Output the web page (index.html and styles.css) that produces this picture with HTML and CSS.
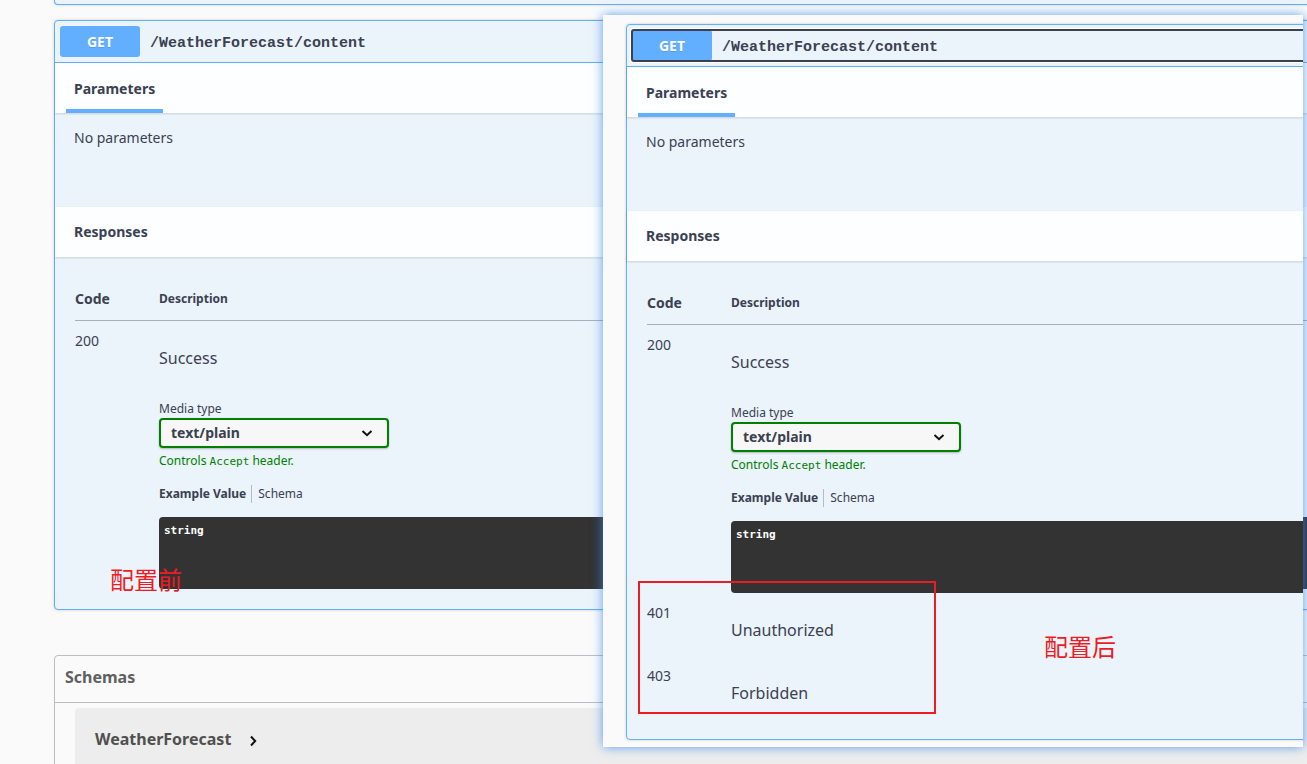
FILE: index.html
```html
<!DOCTYPE html>
<html lang="zh-CN">
<head>
<meta charset="utf-8">
<title>WeatherForecast API</title>
<link rel="stylesheet" href="styles.css">
</head>
<body>
<main class="page">
  <div class="opblock opblock-previous"></div>

  <section class="opblock">
    <button class="summary" type="button"><span class="method">GET</span><span class="path">/WeatherForecast/content</span></button>
    <div class="section-header"><h4 class="tab">Parameters</h4></div>
    <p class="no-params">No parameters</p>
    <div class="section-header"><h4 class="section-title">Responses</h4></div>
    <div class="responses">
      <table class="responses-table">
        <thead><tr><th class="col-code">Code</th><th class="col-desc">Description</th></tr></thead>
        <tbody>
          <tr>
            <td class="code">200</td>
            <td class="desc">
              <p class="message">Success</p>
              <div class="media">
                <label class="small" for="media-before">Media type</label>
                <div class="select-wrap">
                  <select id="media-before"><option>text/plain</option></select>
                  <svg class="select-arrow" viewBox="0 0 20 20" aria-hidden="true"><path d="M5.5 8 10 12.2 14.5 8"/></svg>
                </div>
                <p class="accept">Controls <code>Accept</code> header.</p>
              </div>
              <div class="example-tabs"><button type="button" class="example-tab active">Example Value</button><button type="button" class="example-tab">Schema</button></div>
              <pre class="example">string</pre>
            </td>
          </tr>
        </tbody>
      </table>
    </div>
  </section>

  <section class="models">
    <h4 class="models-title">Schemas</h4>
    <div class="models-list">
      <button class="model" type="button">WeatherForecast<svg class="model-arrow" viewBox="0 0 20 20" aria-hidden="true"><path d="M8 5.5 12.2 10 8 14.5"/></svg></button>
    </div>
  </section>
  <p class="note note-before">配置前</p>
</main>

<aside class="compare">
  <section class="opblock">
    <button class="summary focused" type="button"><span class="method">GET</span><span class="path">/WeatherForecast/content</span></button>
    <div class="section-header"><h4 class="tab">Parameters</h4></div>
    <p class="no-params">No parameters</p>
    <div class="section-header"><h4 class="section-title">Responses</h4></div>
    <div class="responses">
      <table class="responses-table">
        <thead><tr><th class="col-code">Code</th><th class="col-desc">Description</th></tr></thead>
        <tbody>
          <tr>
            <td class="code">200</td>
            <td class="desc">
              <p class="message">Success</p>
              <div class="media">
                <label class="small" for="media-after">Media type</label>
                <div class="select-wrap">
                  <select id="media-after"><option>text/plain</option></select>
                  <svg class="select-arrow" viewBox="0 0 20 20" aria-hidden="true"><path d="M5.5 8 10 12.2 14.5 8"/></svg>
                </div>
                <p class="accept">Controls <code>Accept</code> header.</p>
              </div>
              <div class="example-tabs"><button type="button" class="example-tab active">Example Value</button><button type="button" class="example-tab">Schema</button></div>
              <pre class="example">string</pre>
            </td>
          </tr>
          <tr><td class="code">401</td><td class="desc"><p class="message">Unauthorized</p></td></tr>
          <tr><td class="code">403</td><td class="desc"><p class="message">Forbidden</p></td></tr>
        </tbody>
      </table>
    </div>
  </section>
  <div class="highlight"></div>
  <p class="note note-after">配置后</p>
</aside>
</body>
</html>
```
FILE: styles.css
```css
* { box-sizing: border-box; }

body {
  margin: 0;
  height: 100vh;
  overflow: hidden;
  position: relative;
  background: #fafafa;
  color: #3b4151;
  font-family: "Noto Sans", "Noto Sans CJK SC", sans-serif;
  font-size: 14px;
}

h4, p, pre { margin: 0; }

button {
  margin: 0;
  border: 0;
  background: none;
  color: inherit;
  font-family: inherit;
  text-align: left;
}

.page { padding-left: 54px; margin-right: -40px; }

.opblock {
  border: 1px solid #61affe;
  border-radius: 4px;
  background: #ebf3fb;
  box-shadow: 0 0 3px rgba(0, 0, 0, .19);
}

.opblock-previous {
  height: 5px;
  margin-bottom: 15px;
  border-top: 0;
  border-radius: 0 0 4px 4px;
}

.summary {
  display: flex;
  align-items: center;
  width: calc(100% - 10px);
  margin: 5px;
  padding: 0;
}

.summary.focused {
  outline: 2px solid #3b4151;
  outline-offset: -1px;
  border-radius: 2px;
  box-shadow: 0 0 0 2px #fff;
}

.method {
  width: 80px;
  border-radius: 3px;
  background: #61affe;
  color: #fff;
  font-size: 14px;
  font-weight: 700;
  line-height: 31px;
  text-align: center;
  text-shadow: 0 1px 0 rgba(0, 0, 0, .1);
}

.path {
  padding: 4px 10px 0;
  font-family: "Liberation Mono", monospace;
  font-size: 15px;
  font-weight: 700;
}

.section-header {
  display: flex;
  align-items: center;
  height: 50px;
  padding: 0 11px;
  background: rgba(255, 255, 255, .85);
  box-shadow: 0 1px 2px rgba(0, 0, 0, .15);
}

.summary + .section-header { border-top: 1px solid #61affe; height: 51px; }

.tab, .section-title {
  padding: 0 8px;
  font-size: 14px;
  font-weight: 700;
  line-height: 52px;
}

.tab { min-width: 96px; height: 50px; border-bottom: 4px solid #61affe; }

.no-params {
  height: 94px;
  padding: 15px 19px;
  font-size: 14px;
  line-height: 20px;
}

.responses { padding: 20px; }

.responses-table {
  width: 100%;
  border-collapse: separate;
  border-spacing: 0;
  table-layout: fixed;
}

th {
  height: 44px;
  padding: 0;
  border-bottom: 1px solid #a6b0bd;
  text-align: left;
}

td { padding: 0; vertical-align: top; }

.col-code { width: 84px; font-size: 14px; }
.col-desc { font-size: 12px; }

.code { padding-top: 10px; font-size: 14px; line-height: 20px; }

.desc { padding-top: 25px; }

.message { padding-bottom: 14px; font-size: 16px; line-height: 24px; }

.media { padding-top: 16px; font-size: 12px; line-height: 18px; }

.small { display: block; }

.select-wrap { position: relative; width: 230px; }

select {
  display: block;
  appearance: none;
  width: 100%;
  height: 30px;
  padding: 0 40px 2px 10px;
  border: 2px solid #008000;
  border-radius: 4px;
  background: #f7f7f7;
  box-shadow: 0 1px 2px rgba(0, 0, 0, .25);
  color: #3b4151;
  font-family: inherit;
  font-size: 14px;
  font-weight: 700;
}

.select-arrow {
  position: absolute;
  top: 5px;
  right: 12px;
  width: 20px;
  height: 20px;
}

.select-arrow path, .model-arrow path {
  fill: none;
  stroke: #111;
  stroke-width: 2;
}

.accept { margin-top: 4px; color: #008000; }

.accept code { font-family: "DejaVu Sans Mono", monospace; font-size: 11px; }

.example-tabs { display: flex; align-items: flex-start; margin: 14px 0; }

.example-tab { padding: 0 6px; font-size: 12px; line-height: 18px; }

.example-tab.active {
  padding: 0 5px 0 0;
  border-right: 1px solid #b5bcc5;
  font-weight: 700;
}

.example {
  height: 72px;
  padding: 5px;
  border-radius: 4px;
  background: #333;
  color: #fff;
  font-family: "DejaVu Sans Mono", monospace;
  font-size: 11px;
  font-weight: 700;
  line-height: 18px;
}

.models {
  margin-top: 45px;
  border: 1px solid #bcbdc1;
  border-radius: 4px;
}

.models-title {
  padding: 0 10px 4px;
  border-bottom: 1px solid #bcbdc1;
  color: #606060;
  font-size: 16px;
  line-height: 42px;
}

.models-list { padding: 5px 20px 20px; }

.model {
  display: flex;
  align-items: center;
  width: 100%;
  height: 62px;
  padding: 0 20px;
  border-radius: 4px;
  background: #ededed;
  color: #505050;
  font-size: 16px;
  font-weight: 700;
}

.model-arrow { width: 20px; height: 20px; margin: 4px 0 0 12px; }

.compare {
  position: absolute;
  top: 15px;
  left: 603px;
  right: 4px;
  padding: 9px 0 7px 23px;
  overflow: hidden;
  background: #fafafa;
  box-shadow: 0 0 10px rgba(55, 135, 240, .8);
}

.compare .opblock { margin-right: -40px; }

.highlight {
  position: absolute;
  top: 566px;
  left: 35px;
  width: 298px;
  height: 133px;
  border: 2px solid #ed1c24;
}

.note {
  position: absolute;
  color: #ed1c24;
  font-family: "Noto Sans CJK SC", sans-serif;
  font-size: 24px;
  line-height: 32px;
}

.note-before { top: 563px; left: 110px; }
.note-after { top: 615px; left: 441px; }
```
